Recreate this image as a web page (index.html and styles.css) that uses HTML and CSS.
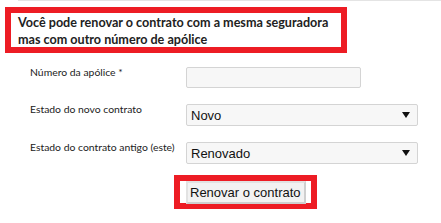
FILE: index.html
```html
<!DOCTYPE html>
<html>
	<head>
		<meta charset="UTF-8">
		<title>Renovar contrato</title>
		<link rel="stylesheet" href="styles.css">
	</head>
	<body>
		<div class="topline"></div>
		<div class="mark head">
			<p>Você pode renovar o contrato com a mesma seguradora mas com outro número de apólice</p>
		</div>
		<form class="renew">
			<label>Número da apólice *</label>
			<input type="text" class="field" />
			<label>Estado do novo contrato</label>
			<select class="field sel">
				<option>Novo</option>
			</select>
			<label>Estado do contrato antigo (este)</label>
			<select class="field sel">
				<option>Renovado</option>
			</select>
			<span></span>
			<div class="mark btnmark">
				<button type="button">Renovar o contrato</button>
			</div>
		</form>
	</body>
</html>
```

FILE: styles.css
```css
body{
	margin: 0;
	background: #fff;
	font-family: Lato, "Open Sans", sans-serif;
	color: #222;
}
.topline{
	margin-left: 18px;
	height: 1px;
	background-color: #e4e4e4;
}
.mark{
	border: 6px solid #ed1c24;
}
.head{
	margin: 6px 0 0 5px;
	width: 323px;
	height: 34px;
	padding-left: 7px;
}
.head p{
	margin: 0;
	padding-top: 1px;
	font-size: 12.6px;
	font-weight: bold;
	line-height: 17px;
}
.renew{
	display: grid;
	grid-template-columns: 156px auto;
	row-gap: 16px;
	margin: 14px 0 0 30px;
	align-items: start;
}
.renew label{
	font-size: 10.4px;
	margin-top: -1px;
	line-height: 12.5px;
}
.field{
	box-sizing: border-box;
	height: 21px;
	border: 1px solid #d4d4d4;
	border-radius: 2px;
	background-color: #f7f7f7;
	font-family: "Liberation Sans", Arial, sans-serif;
	font-size: 13px;
	margin: 0;
}
input.field{
	width: 175px;
}
.sel{
	width: 232px;
	height: 22px;
	padding-left: 4px;
	color: #111;
	-webkit-appearance: none;
	appearance: none;
	background-image: url("data:image/svg+xml;utf8,<svg xmlns='http://www.w3.org/2000/svg' width='8' height='6'><path d='M0 0h8L4 6z' fill='%23111'/></svg>");
	background-repeat: no-repeat;
	background-position: right 7px center;
}
.btnmark{
	justify-self: start;
	margin: -5px 0 0 -12px;
	padding: 0 5px 0 6px;
	height: 22px;
}
.btnmark button{
	box-sizing: border-box;
	height: 23px;
	width: 120px;
	margin-top: -1px;
	padding: 0 2px;
	white-space: nowrap;
	text-align: left;
	font-family: "Liberation Sans", Arial, sans-serif;
	font-size: 13px;
	color: #111;
	background-color: #f2f2f2;
	border: 2px solid #cfcfcf;
	border-top-color: #e2e2e2;
	border-left-color: #e2e2e2;
}
```
